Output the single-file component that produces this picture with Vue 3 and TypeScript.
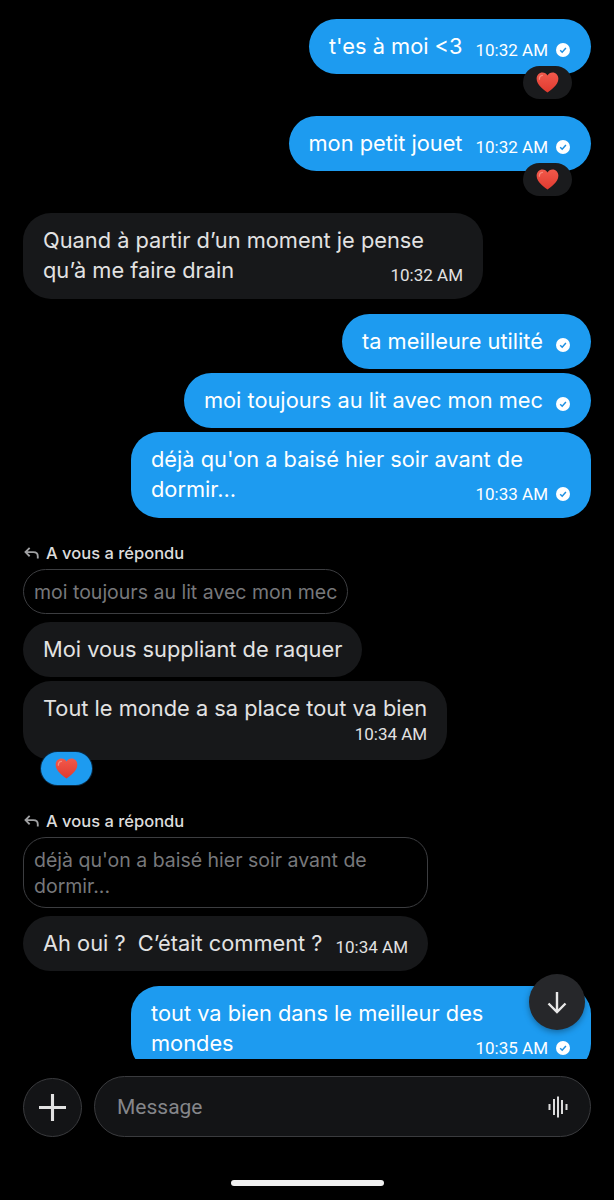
<template>
  <div class="screen">
    <div class="thread">
      <div class="messages">
        <template v-for="(msg, index) in messages" :key="index">
          <div v-if="msg.quote" :class="['reply-head', `gap-${msg.gap}`]">
            <svg class="reply-icon" viewBox="0 0 16 13" fill="none">
              <path d="M6 1 1.500 5.500 6 10M1.500 5.500h8.500c3 0 4.800 1.800 4.800 4.500v2.500" />
            </svg>
            <span>A vous a répondu</span>
          </div>
          <div v-if="msg.quote" class="quote">{{ msg.quote }}</div>
          <div
            :class="['bubble', msg.mine ? 'mine' : 'theirs', msg.layout ?? 'inline', msg.quote ? 'gap-8' : `gap-${msg.gap}`]"
          >
            <div class="text">{{ msg.text }}</div>
            <div v-if="msg.time || msg.mine" class="meta">
              <span v-if="msg.time" class="time">{{ msg.time }}</span>
              <svg v-if="msg.mine" class="check" viewBox="0 0 14 14">
                <circle cx="7" cy="7" r="7" fill="#fff" />
                <path d="M4.200 7.200 6.200 9.200 9.900 5" fill="none" stroke="#1d8fe0" stroke-width="1.500" />
              </svg>
            </div>
            <div v-if="msg.reaction" :class="['reaction', `reaction--${msg.reaction}`]">
              <svg class="heart" viewBox="0 0 24 22">
                <defs>
                  <linearGradient :id="`heart-${index}`" x1="0" y1="0" x2="0" y2="1">
                    <stop offset="0" stop-color="#f2594b" />
                    <stop offset="1" stop-color="#e03a2f" />
                  </linearGradient>
                </defs>
                <path
                  d="M12 21.600C8.500 18.600.6 13.800.6 7 .6 3.300 3.400.5 6.700.5c2.300 0 4.200 1.200 5.300 3.200C13.100 1.700 15 .5 17.300.5c3.300 0 6.100 2.800 6.100 6.500 0 6.800-7.900 11.600-11.400 14.600z"
                  :fill="`url(#heart-${index})`"
                />
                <path d="M3.500 7.500c0-2 1.400-3.700 3.200-3.900" fill="none" stroke="#fa8a7c" stroke-width="1.400" stroke-linecap="round" />
              </svg>
            </div>
          </div>
        </template>
      </div>
      <button class="scroll-down">
        <svg viewBox="0 0 24 24" fill="none">
          <path d="M12 2v20M3.500 13.500 12 22l8.500-8.500" />
        </svg>
      </button>
    </div>

    <div class="composer">
      <button class="plus">
        <svg viewBox="0 0 26 26" fill="none">
          <path d="M13 0v26M0 13h26" />
        </svg>
      </button>
      <div class="input">
        <span class="placeholder">Message</span>
        <svg class="wave" viewBox="0 0 20 22" fill="none">
          <path d="M1.500 8v6M6 3v16M10 0.500v21M14 4v14M18.500 8v6" />
        </svg>
      </div>
    </div>
    <div class="home-bar"></div>
  </div>
</template>

<script setup lang="ts">
interface Message {
  text: string;
  mine: boolean;
  time?: string;
  gap: number;
  layout?: 'inline' | 'wrap' | 'below';
  reaction?: 'dark' | 'blue';
  quote?: string;
}

const messages: Message[] = [
  { text: "t'es à moi <3", mine: true, time: '10:32 AM', gap: 0, reaction: 'dark' },
  { text: 'mon petit jouet', mine: true, time: '10:32 AM', gap: 42, reaction: 'dark' },
  {
    text: 'Quand à partir d’un moment je pense qu’à me faire drain',
    mine: false,
    time: '10:32 AM',
    gap: 42,
    layout: 'wrap',
  },
  { text: 'ta meilleure utilité', mine: true, gap: 15 },
  { text: 'moi toujours au lit avec mon mec', mine: true, gap: 4 },
  {
    text: "déjà qu'on a baisé hier soir avant de dormir...",
    mine: true,
    time: '10:33 AM',
    gap: 4,
    layout: 'wrap',
  },
  {
    text: 'Moi vous suppliant de raquer',
    mine: false,
    gap: 25,
    quote: 'moi toujours au lit avec mon mec',
  },
  {
    text: 'Tout le monde a sa place tout va bien',
    mine: false,
    time: '10:34 AM',
    gap: 4,
    layout: 'below',
    reaction: 'blue',
  },
  {
    text: 'Ah oui ?  C’était comment ?',
    mine: false,
    time: '10:34 AM',
    gap: 51,
    quote: "déjà qu'on a baisé hier soir avant de dormir...",
  },
  {
    text: 'tout va bien dans le meilleur des mondes',
    mine: true,
    time: '10:35 AM',
    gap: 15,
    layout: 'wrap',
  },
];
</script>

<style scoped>
.screen {
  width: 614px;
  height: 1200px;
  background: #000;
  font-family: Inter, Roboto, sans-serif;
  display: flex;
  flex-direction: column;
  overflow: hidden;
}

.thread {
  position: relative;
  height: 1059px;
  overflow: hidden;
}

.messages {
  display: flex;
  flex-direction: column;
  align-items: flex-start;
  padding: 19px 23px 0;
}

.gap-4 { margin-top: 4px; }
.gap-8 { margin-top: 8px; }
.gap-15 { margin-top: 15px; }
.gap-25 { margin-top: 25px; }
.gap-42 { margin-top: 42px; }
.gap-51 { margin-top: 51px; }

.reply-head {
  display: flex;
  align-items: center;
  gap: 7px;
  height: 20px;
  padding-left: 1px;
  color: #dcdcdc;
  font-size: 16.500px;
  font-weight: 500;
}

.reply-icon {
  width: 15px;
  height: 12px;
  stroke: #a0a1a3;
  stroke-width: 2;
}

.quote {
  margin-top: 6px;
  max-width: 405px;
  box-sizing: border-box;
  padding: 8.500px 10px;
  border: 1.500px solid #3c3d40;
  border-radius: 23px;
  color: #77787b;
  font-size: 19.500px;
  line-height: 26px;
}

.bubble {
  position: relative;
  max-width: 460px;
  box-sizing: border-box;
  padding: 12px 20px 13px;
  border-radius: 28px;
  font-size: 21.800px;
  line-height: 30px;
  flex-shrink: 0;
}

.text {
  white-space: pre-wrap;
}

.mine {
  align-self: flex-end;
  background: #1d9bf0;
  color: #fff;
}

.mine .meta {
  margin-right: 1px;
}

.theirs {
  background: #17181a;
  color: #e2e2e2;
}

.inline {
  display: flex;
  align-items: center;
  gap: 13px;
}

.inline .meta {
  padding-top: 7px;
}

.wrap .meta {
  justify-content: flex-end;
  margin-top: -21px;
}

.below .meta {
  justify-content: flex-end;
  height: 22px;
  margin-bottom: 2px;
}

.meta {
  display: flex;
  align-items: center;
  gap: 8px;
  line-height: 22px;
}

.time {
  font-family: Roboto, sans-serif;
  font-size: 17px;
}

.check {
  width: 14px;
  height: 14px;
}

.reaction {
  position: absolute;
  display: flex;
  align-items: center;
  justify-content: center;
  width: 49px;
  height: 33px;
  border-radius: 17px;
}

.reaction--dark {
  right: 19px;
  bottom: -25px;
  background: #1a1b1d;
}

.reaction--blue {
  left: 18px;
  bottom: -25px;
  width: 51px;
  background: #1d9bf0;
  box-shadow: 0 0 0 1px #0a2a44;
}

.heart {
  width: 23px;
  height: 21px;
}

.scroll-down {
  position: absolute;
  top: 974px;
  right: 29px;
  width: 56px;
  height: 56px;
  padding: 0;
  display: flex;
  align-items: center;
  justify-content: center;
  border: none;
  border-radius: 50%;
  background: #26272a;
  box-shadow: 0 2px 6px rgba(0, 0, 0, 0.35);
}

.scroll-down svg {
  width: 24px;
  height: 26px;
  stroke: #e8e8e8;
  stroke-width: 2.400;
}

.composer {
  display: flex;
  align-items: flex-end;
  gap: 12px;
  padding: 17px 23px 0;
}

.plus {
  width: 59px;
  height: 59px;
  flex-shrink: 0;
  padding: 0;
  display: flex;
  align-items: center;
  justify-content: center;
  border: 1.500px solid #3a3b3e;
  border-radius: 50%;
  background: #131416;
}

.plus svg {
  width: 27px;
  height: 27px;
  stroke: #e2e2e2;
  stroke-width: 3;
}

.input {
  flex: 1;
  height: 61px;
  box-sizing: border-box;
  display: flex;
  align-items: center;
  justify-content: space-between;
  padding: 0 22px;
  border: 1.500px solid #3a3b3e;
  border-radius: 31px;
  background: #131416;
}

.placeholder {
  font-family: Roboto, sans-serif;
  color: #85868a;
  font-size: 21px;
}

.wave {
  width: 20px;
  height: 22px;
  stroke: #dcdcdc;
  stroke-width: 2;
}

.home-bar {
  width: 153px;
  height: 6px;
  margin: 43px auto 0;
  border-radius: 3px;
  background: #f0f0f0;
}
</style>

<style>
html,
body {
  margin: 0;
  background: #000;
}
</style>
